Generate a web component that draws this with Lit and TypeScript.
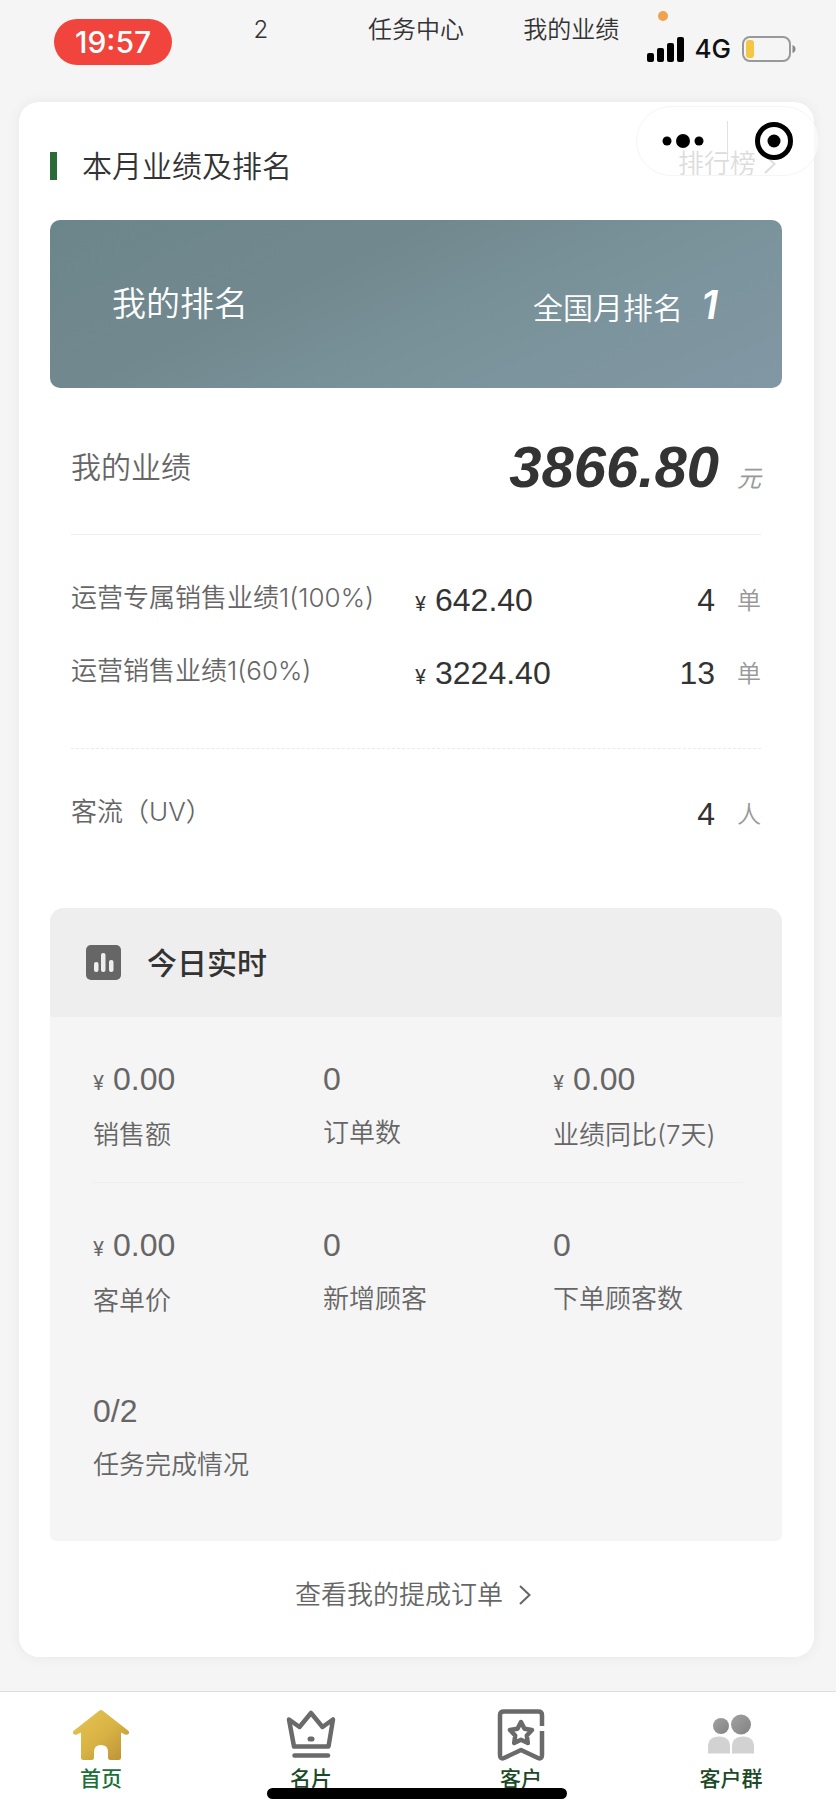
import { LitElement, html, css, svg, nothing } from "lit";
import { customElement } from "lit/decorators.js";

interface Metric {
  money?: boolean;
  value: string;
  label: string;
}

interface Sale {
  label: string;
  amount?: string;
  count: string;
  unit: string;
}

const SALES: Sale[] = [
  { label: "运营专属销售业绩1(100%)", amount: "642.40", count: "4", unit: "单" },
  { label: "运营销售业绩1(60%)", amount: "3224.40", count: "13", unit: "单" },
];

const METRIC_ROWS: Metric[][] = [
  [
    { money: true, value: "0.00", label: "销售额" },
    { value: "0", label: "订单数" },
    { money: true, value: "0.00", label: "业绩同比(7天)" },
  ],
  [
    { money: true, value: "0.00", label: "客单价" },
    { value: "0", label: "新增顾客" },
    { value: "0", label: "下单顾客数" },
  ],
  [{ value: "0/2", label: "任务完成情况" }],
];

const homeIcon = svg`
  <defs><linearGradient id="gold" x1="0" y1="0" x2="1" y2="1">
    <stop offset="0" stop-color="#e6c455"/><stop offset="0.5" stop-color="#d9b445"/><stop offset="1" stop-color="#b98f35"/>
  </linearGradient></defs>
  <path fill="url(#gold)" d="M26.500 1.600 Q28 0.400 29.500 1.600 L55 21.500 Q57 23.500 55.500 25 Q54 26.500 51.500 25.300 L48 23.500 V48.500 Q48 51 45.500 51 H37.500 Q35 51 35 48.500 V43 Q35 36 28 36 Q21 36 21 43 V48.500 Q21 51 18.500 51 H10.500 Q8 51 8 48.500 V23.500 L4.500 25.300 Q2 26.500 0.500 25 Q-1 23.500 1 21.500 Z"/>`;

const crownIcon = svg`
  <g fill="none" stroke="#6a6a6a" stroke-width="4.500" stroke-linejoin="round" stroke-linecap="round">
    <path d="M6 10.500 L16.500 18 L28 4 L39.500 18 L50 10.500 L45.500 37.500 H11 Z"/>
    <path d="M11.500 46.500 H45"/>
  </g>
  <rect x="24.500" y="27.500" width="7" height="5" rx="2.500" fill="#6a6a6a"/>`;

const bookmarkIcon = svg`
  <g fill="none" stroke="#6a6a6a" stroke-width="4.500" stroke-linejoin="round" stroke-linecap="butt">
    <path d="M49 17 V6 Q49 2.500 45 2.500 H11 Q7 2.500 7 6 V46 Q7 50.500 11 49 L28 41 L45 49 Q49 50.500 49 46 V22"/>
    <path d="M28 13 L31.500 19.700 L39 21 L33.800 26.500 L34.800 34 L28 30.800 L21.200 34 L22.200 26.500 L17 21 L24.500 19.700 Z"/>
  </g>`;

const groupIcon = svg`
  <defs><linearGradient id="head" x1="0" y1="0" x2="1" y2="1">
    <stop offset="0" stop-color="#a2a2a2"/><stop offset="1" stop-color="#828282"/>
  </linearGradient></defs>
  <circle cx="18" cy="17" r="8" fill="url(#head)"/>
  <circle cx="38" cy="15.500" r="10" fill="url(#head)"/>
  <path fill="#d2d2d2" d="M5 44.500 V38 Q5 27.500 16 27.500 Q27 27.500 27 38 V44.500 Z"/>
  <path fill="#d2d2d2" d="M29 44.500 V38 Q29 27.500 40 27.500 Q51 27.500 51 38 V44.500 Z"/>`;

const NAV = [
  { label: "首页", icon: homeIcon, active: true },
  { label: "名片", icon: crownIcon },
  { label: "客户", icon: bookmarkIcon },
  { label: "客户群", icon: groupIcon },
];

@customElement("app-root")
export class AppRoot extends LitElement {
  static styles = css`
    :host {
      display: block;
      position: relative;
      border-right: 4px solid #fff;
      background: #f5f5f5;
      color: #333;
      font-family: "Inter", "Noto Sans CJK SC", sans-serif;
      font-weight: 350;
      font-size: 26px;
      line-height: 36px;
    }
    a { color: inherit; text-decoration: none; }
    button { border: 0; padding: 0; background: none; font: inherit; color: inherit; }
    svg { display: block; }
    h2, h3, p, dl, dd, dt { margin: 0; font-weight: inherit; }

    .tabs {
      display: grid;
      grid-template-columns: repeat(5, 1fr);
      padding: 12px 32px 54px 28px;
      font-size: 24px;
      text-align: center;
    }
    .tabs :first-child { grid-column: 2; }

    .status {
      position: absolute;
      inset: 0 0 auto 0;
      display: flex;
      justify-content: space-between;
      align-items: flex-start;
      padding: 0 40px 0 54px;
    }
    .clock {
      margin-top: 19px;
      padding: 0 21px;
      border-radius: 24px;
      background: #f0443c;
      color: #fff;
      font-size: 30px;
      font-weight: 500;
      line-height: 46px;
    }
    .signals { display: flex; align-items: center; gap: 11px; margin-top: 31px; }
    .carrier { font-size: 26px; font-weight: 500; color: #111; line-height: 36px; }
    .dot {
      position: absolute;
      top: 11px;
      right: 168px;
      width: 10px;
      height: 10px;
      border-radius: 50%;
      background: #f2a24c;
    }

    .capsule {
      position: absolute;
      top: 106px;
      right: 17px;
      display: flex;
      align-items: center;
      height: 68px;
      padding: 0 25px;
      border: 1px solid #f5f5f5;
      border-radius: 35px;
      background: rgba(255, 255, 255, 0.6);
    }
    .capsule .bar { width: 1px; height: 40px; margin: 0 27px 0 23px; background: #e2e2e2; }

    .card {
      margin: 0 22px 34px 19px;
      padding: 40px 32px 42px 31px;
      border-radius: 20px;
      background: #fff;
      box-shadow: 0 0 14px rgba(0, 0, 0, 0.06);
    }
    .head { display: flex; align-items: center; padding-bottom: 30px; line-height: 48px; }
    .head::before { content: ""; width: 7px; height: 28px; margin-right: 25px; background: #2b6b38; }
    .head h2 { flex: 1; font-size: 30px; }
    .more { display: flex; align-items: center; gap: 8px; padding: 0 6px 4px 0; color: #aaa; line-height: 40px; }

    .rank {
      display: flex;
      justify-content: space-between;
      align-items: center;
      height: 168px;
      padding: 0 64px 0 62px;
      border-radius: 10px;
      background: linear-gradient(155deg, #6b868b 0%, #72888f 35%, #7a939b 65%, #8297a4 100%);
      color: #fff;
      box-sizing: border-box;
    }
    .rank h3 { font-size: 34px; }
    .place { display: flex; align-items: baseline; gap: 18px; padding-top: 4px; font-size: 30px; }
    .place b { font-size: 40px; font-style: italic; font-weight: 600; }

    .stats { padding: 0 21px; color: #666; }
    .total { display: flex; justify-content: space-between; align-items: center; height: 146px; border-bottom: 1px solid #eee; }
    .total h3 { font-size: 30px; margin-top: 12px; }
    .sum { display: flex; align-items: baseline; gap: 18px; font-style: italic; margin-top: 12px; }
    .sum b { font: italic 700 58px/70px "Liberation Sans", sans-serif; color: #333; }
    .sum i { font-size: 24px; font-weight: 400; color: #999; }
    .sales { padding: 28px 0 39px; border-bottom: 1px dashed #eaeaea; }
    .traffic { padding: 28px 0 58px; }
    .sale { display: grid; grid-template-columns: 344px 1fr auto auto; height: 73px; line-height: 69px; }
    .sale .fig { line-height: 74px; }
    .num { font-family: "Liberation Sans", sans-serif; font-size: 32px; font-weight: 400; color: #333; }
    .yen { font-size: 20px; font-weight: 400; color: #333; margin-right: 9px; }
    .unit { font-size: 24px; line-height: 76px; color: #999; margin-left: 22px; }

    .today { border-radius: 14px 14px 6px 6px; overflow: hidden; background: #f5f5f5; color: #666; }
    .today-head { display: flex; align-items: center; gap: 26px; height: 109px; padding-left: 36px; background: #eee; }
    .today-head h3 { font-size: 30px; font-weight: 500; color: #333; }
    .metrics { padding: 0 39px 0 43px; }
    .row { display: grid; grid-template-columns: repeat(3, 230px); height: 166px; box-sizing: border-box; padding-top: 40px; border-bottom: 1px solid #eee; }
    .row + .row { border-bottom-color: #f3f3f3; }
    .row:last-child { height: 192px; border: 0; }
    .row .num, .row .yen { color: #666; }
    .value { line-height: 44px; }
    .label { margin-top: 12px; line-height: 36px; }

    .orders { display: flex; justify-content: center; align-items: center; gap: 16px; margin: 34px 0 0; padding-right: 6px; color: #666; line-height: 40px; }

    .nav {
      display: flex;
      justify-content: space-between;
      padding: 17px 32px 17px 28px;
      border-top: 1px solid #ddd;
      background: #fff;
      color: #1c4a26;
    }
    .nav a { display: flex; flex-direction: column; align-items: center; width: 146px; font-size: 21px; font-weight: 500; line-height: 30px; gap: 3px; }
    .nav .active { color: #1a7038; }
    .indicator {
      position: absolute;
      bottom: 12px;
      left: 50%;
      width: 300px;
      height: 11px;
      margin-left: -151px;
      border-radius: 6px;
      background: #000;
    }
  `;

  private chevron() {
    return html`<svg width="12" height="20" viewBox="0 0 12 20" fill="none" stroke="currentColor" stroke-width="2">
      <path d="M1 1 L10.500 10 L1 19" />
    </svg>`;
  }

  private sale(s: Sale) {
    return html`<div class="sale">
      <span>${s.label}</span>
      <span class="fig">${s.amount ? html`<span class="yen">¥</span><span class="num">${s.amount}</span>` : nothing}</span>
      <span class="fig num">${s.count}</span>
      <span class="unit">${s.unit}</span>
    </div>`;
  }

  render() {
    return html`
      <nav class="tabs"><a href="#">2</a><a href="#">任务中心</a><a href="#">我的业绩</a></nav>

      <div class="status">
        <span class="clock">19:57</span>
        <i class="dot"></i>
        <div class="signals">
          <svg width="37" height="25" viewBox="0 0 37 25" fill="#000">
            <rect x="0" y="16" width="7" height="9" rx="2" /><rect x="10" y="11" width="7" height="14" rx="2" />
            <rect x="20" y="6" width="7" height="19" rx="2" /><rect x="30" y="0" width="7" height="25" rx="2" />
          </svg>
          <span class="carrier">4G</span>
          <svg width="54" height="26" viewBox="0 0 54 26">
            <rect x="1" y="1" width="47" height="24" rx="7" fill="none" stroke="#999" stroke-width="2" />
            <rect x="4" y="4" width="8" height="18" rx="3" fill="#f5c544" />
            <path d="M50.500 9 Q53.500 10 53.500 13 Q53.500 16 50.500 17 Z" fill="#888" />
          </svg>
        </div>
      </div>

      <main class="card">
        <header class="head">
          <h2>本月业绩及排名</h2>
          <a class="more" href="#">排行榜 ${this.chevron()}</a>
        </header>
        <section class="rank">
          <h3>我的排名</h3>
          <p class="place"><span>全国月排名</span><b>1</b></p>
        </section>
        <section class="stats">
          <div class="total"><h3>我的业绩</h3><p class="sum"><b>3866.80</b><i>元</i></p></div>
          <div class="sales">${SALES.map((s) => this.sale(s))}</div>
          <div class="traffic">${this.sale({ label: "客流（UV）", count: "4", unit: "人" })}</div>
        </section>
        <section class="today">
          <header class="today-head">
            <svg width="35" height="35" viewBox="0 0 35 35">
              <rect width="35" height="35" rx="5" fill="#666" />
              <rect x="8" y="17" width="4.500" height="10" rx="2" fill="#eee" />
              <rect x="15" y="8" width="4.500" height="19" rx="2" fill="#eee" />
              <rect x="23" y="15" width="4.500" height="12" rx="2" fill="#eee" />
            </svg>
            <h3>今日实时</h3>
          </header>
          <div class="metrics">
            ${METRIC_ROWS.map((row) => html`<div class="row">${row.map((m) => html`<dl>
              <dd class="value">${m.money ? html`<span class="yen">¥</span>` : nothing}<span class="num">${m.value}</span></dd>
              <dt class="label">${m.label}</dt>
            </dl>`)}</div>`)}
          </div>
        </section>
        <a class="orders" href="#">查看我的提成订单 ${this.chevron()}</a>
      </main>

      <div class="capsule">
        <button aria-label="更多">
          <svg width="42" height="14" viewBox="0 0 42 14"><circle cx="5" cy="7" r="4.500" /><circle cx="21" cy="7" r="7" /><circle cx="37" cy="7" r="4.500" /></svg>
        </button>
        <span class="bar"></span>
        <button aria-label="关闭">
          <svg width="38" height="38" viewBox="0 0 38 38"><circle cx="19" cy="19" r="16.500" fill="none" stroke="#000" stroke-width="5" /><circle cx="19" cy="19" r="6.500" /></svg>
        </button>
      </div>

      <nav class="nav">
        ${NAV.map((n) => html`<a href="#" class=${n.active ? "active" : "idle"}>
          <svg width="56" height="52" viewBox="0 0 56 52">${n.icon}</svg>${n.label}</a>`)}
      </nav>
      <div class="indicator"></div>
    `;
  }
}
